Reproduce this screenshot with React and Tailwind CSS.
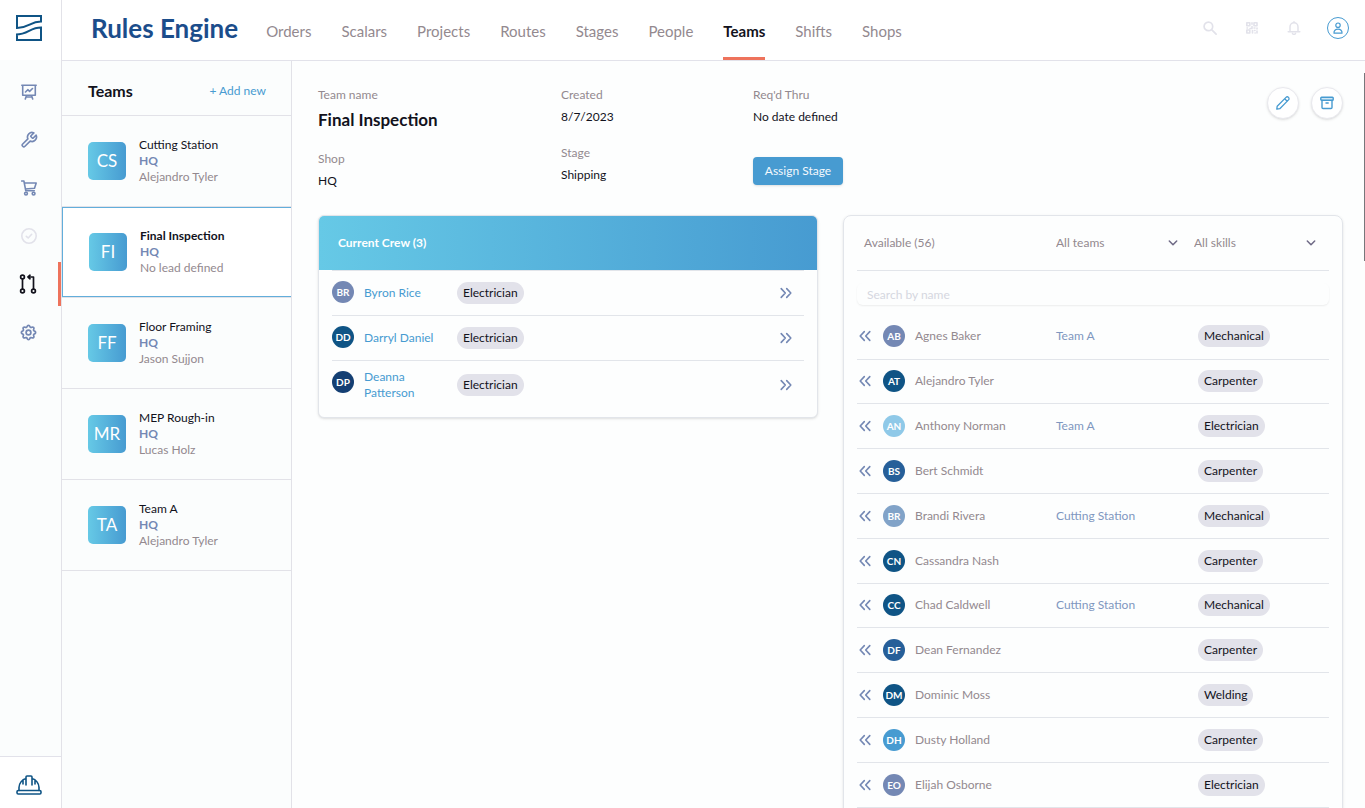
import React from 'react';
import { LuWrench } from 'react-icons/lu';
import { TbSettings } from 'react-icons/tb';

const navItems = ['Orders', 'Scalars', 'Projects', 'Routes', 'Stages', 'People', 'Teams', 'Shifts', 'Shops'];

const teams = [
  { code: 'CS', name: 'Cutting Station', lead: 'Alejandro Tyler' },
  { code: 'FI', name: 'Final Inspection', lead: 'No lead defined' },
  { code: 'FF', name: 'Floor Framing', lead: 'Jason Sujjon' },
  { code: 'MR', name: 'MEP Rough-in', lead: 'Lucas Holz' },
  { code: 'TA', name: 'Team A', lead: 'Alejandro Tyler' },
];

const crew = [
  { code: 'BR', name: 'Byron Rice', skill: 'Electrician', color: 'bg-[#7488b4]' },
  { code: 'DD', name: 'Darryl Daniel', skill: 'Electrician', color: 'bg-[#0f5485]' },
  { code: 'DP', name: 'Deanna Patterson', skill: 'Electrician', color: 'bg-[#143f73]' },
];

const available = [
  { code: 'AB', name: 'Agnes Baker', team: 'Team A', skill: 'Mechanical', color: 'bg-[#7488b4]' },
  { code: 'AT', name: 'Alejandro Tyler', team: '', skill: 'Carpenter', color: 'bg-[#0f5485]' },
  { code: 'AN', name: 'Anthony Norman', team: 'Team A', skill: 'Electrician', color: 'bg-[#8fc9e8]' },
  { code: 'BS', name: 'Bert Schmidt', team: '', skill: 'Carpenter', color: 'bg-[#265f99]' },
  { code: 'BR', name: 'Brandi Rivera', team: 'Cutting Station', skill: 'Mechanical', color: 'bg-[#81a3c8]' },
  { code: 'CN', name: 'Cassandra Nash', team: '', skill: 'Carpenter', color: 'bg-[#0f5485]' },
  { code: 'CC', name: 'Chad Caldwell', team: 'Cutting Station', skill: 'Mechanical', color: 'bg-[#0f5485]' },
  { code: 'DF', name: 'Dean Fernandez', team: '', skill: 'Carpenter', color: 'bg-[#265f99]' },
  { code: 'DM', name: 'Dominic Moss', team: '', skill: 'Welding', color: 'bg-[#0f5485]' },
  { code: 'DH', name: 'Dusty Holland', team: '', skill: 'Carpenter', color: 'bg-[#479bd1]' },
  { code: 'EO', name: 'Elijah Osborne', team: '', skill: 'Electrician', color: 'bg-[#7488b4]' },
];

function Svg({ size = 16, box = 16, width = 1.6, children }) {
  return (
    <svg width={size} height={size} viewBox={`0 0 ${box} ${box}`} fill="none" stroke="currentColor" strokeWidth={width} strokeLinecap="round" strokeLinejoin="round" aria-hidden="true">
      {children}
    </svg>
  );
}

const Logo = () => (
  <svg width="26" height="26" viewBox="0 0 26 26" fill="none" stroke="#0f5485" strokeWidth="2" aria-hidden="true">
    <path d="M1 13V1h24v5.500C14 6.500 13 13 1 13z" />
    <path d="M0 19.500C12 19.500 14 12.500 25 12.500V25H1v-5.500" />
  </svg>
);

const Presentation = () => (
  <Svg>
    <path d="M.8 1.200h14.400M1.700 1.200v10h12.600v-10M4.500 8l2.300-2.300 1.800 1.600L11.500 4.500M5.500 11.500L4.300 15M10.500 11.500l1.200 3.500M5 13h6" />
  </Svg>
);

const Cart = () => (
  <Svg>
    <path d="M.7 1h2.200l1.900 9.800h8.500M3.300 3h11.900l-1.700 5.300-9.200.7" />
    <circle cx="5" cy="13.600" r="1.400" />
    <circle cx="12.600" cy="13.600" r="1.400" />
  </Svg>
);

const CheckCircle = () => (
  <Svg>
    <circle cx="8" cy="8" r="7.200" />
    <path d="M5.300 8.300l1.900 1.700 3.500-3.700" />
  </Svg>
);

const Flow = () => (
  <Svg size={20} box={20} width={1.7}>
    <circle cx="3.500" cy="3" r="1.900" />
    <circle cx="3.500" cy="17" r="1.900" />
    <circle cx="14.500" cy="17" r="1.900" />
    <path d="M3.500 5v10M14.500 15V3H9.500M11 1.200L9 3l2 1.800" />
  </Svg>
);

const HardHat = () => (
  <Svg size={26} box={26} width={1.6}>
    <rect x="1" y="16.500" width="24" height="3.500" rx="1.200" />
    <path d="M3 16.500v-3c0-4 3-8 7-9M23 16.500v-3c0-4-3-8-7-9M10 11V3c0-.6.4-1 1-1h4c.6 0 1 .4 1 1v8M7 6.500V10M19 6.500V10" />
  </Svg>
);

const SearchIcon = () => (
  <Svg size={14} box={14} width={1.7}>
    <circle cx="5.400" cy="5.400" r="4.300" />
    <path d="M8.600 8.600l4.500 4.500" />
  </Svg>
);

const QrIcon = () => (
  <Svg size={12} box={12} width={1.6}>
    <rect x=".8" y=".8" width="3" height="3" />
    <rect x="8" y=".8" width="3" height="3" />
    <rect x=".8" y="8" width="3" height="3" />
    <path d="M6 .8v1.500M6 4.500v2H4M1 6h.5M8 6h1M11 6v1M6.500 8.500v2.500M8.500 8.500h.5M11 9v2M9 11h.2" />
  </Svg>
);

const Bell = () => (
  <Svg size={14} box={14} width={1.5}>
    <path d="M7 .8v.8M3 10.500V6c0-2.400 1.700-4.200 4-4.200S11 3.600 11 6v4.500M1.200 10.700h11.600M5.500 12.500c.3.700.8.900 1.500.9s1.200-.2 1.500-.9" />
  </Svg>
);

const Person = () => (
  <Svg size={12} box={12} width={1.2}>
    <circle cx="6" cy="3.200" r="2.200" />
    <path d="M2 11.200h8c.3-2.700-1.500-4-4-4s-4.300 1.300-4 4z" />
  </Svg>
);

const Pencil = () => (
  <Svg size={14} box={14} width={1.3}>
    <path d="M.8 13.200l.4-3L10 1.400a1.700 1.700 0 0 1 2.500 2.500L3.800 12.700zM8.700 2.800l2.500 2.500" />
  </Svg>
);

const Archive = () => (
  <Svg size={14} box={14} width={1.4}>
    <rect x=".8" y="1.300" width="12.400" height="3" rx=".8" fill="#cfe6f5" />
    <path d="M2 4.500v7c0 .6.300 1 1 1h8c.7 0 1-.4 1-1v-7M6 7h2.200" />
  </Svg>
);

const Chevrons = ({ left }) => (
  <Svg size={12} box={12} width={1.6}>
    <path d={left ? 'M5.300 1.600L1.200 6l4.100 4.400M10.800 1.600L6.700 6l4.100 4.400' : 'M1.200 1.600L5.300 6l-4.100 4.400M6.700 1.600L10.800 6l-4.100 4.400'} />
  </Svg>
);

const sideLinks = [
  { label: 'Reports', icon: <Presentation />, tone: 'text-[#7488b4]' },
  { label: 'Tools', icon: <LuWrench size={18} strokeWidth={2.200} className="-scale-x-100 rotate-90" />, tone: 'text-[#7488b4]' },
  { label: 'Purchasing', icon: <Cart />, tone: 'text-[#7488b4]' },
  { label: 'Quality', icon: <CheckCircle />, tone: 'text-[#e2e2ea]' },
  { label: 'Rules engine', icon: <Flow />, tone: 'text-[#12121c] border-[#ee735c]' },
  { label: 'Settings', icon: <TbSettings size={19} strokeWidth={2.200} />, tone: 'text-[#7488b4]' },
];

function Avatar({ code, color }) {
  return (
    <span className={`flex size-[22px] items-center justify-center rounded-full text-[10px] leading-none font-bold text-white ${color}`}>
      {code}
    </span>
  );
}

function Skill({ children }) {
  return <span className="inline-flex h-[22px] items-center rounded-full bg-[#e2e2ea] px-[6px] align-middle text-[#12121c]">{children}</span>;
}

function Field({ label, children, className = '' }) {
  return (
    <div className={className}>
      <dt className="text-[#93898f]">{label}</dt>
      <dd className="mt-[6px] text-[#12121c]">{children}</dd>
    </div>
  );
}

function Filter({ label, className }) {
  return (
    <label className={`relative flex items-center ${className}`}>
      <select aria-label={label} className="h-6 w-full appearance-none bg-transparent pr-5 leading-6 text-[#93898f] outline-none">
        <option>{label}</option>
      </select>
      <svg className="pointer-events-none absolute right-0" width="10" height="10" viewBox="0 0 10 10" fill="none" stroke="#6f6a86" strokeWidth="1.500" strokeLinecap="round" strokeLinejoin="round" aria-hidden="true">
        <path d="M1.300 3L5 6.800 8.700 3" />
      </svg>
    </label>
  );
}

export default function App() {
  return (
    <div className="flex h-screen overflow-hidden bg-[#fdfefe] font-[Lato,sans-serif] text-[12px] leading-4 text-[#12121c]">
      <aside className="flex w-[62px] shrink-0 flex-col border-r border-[#e2e2e8] bg-[#fbfdfd]">
        <a href="#home" aria-label="Home" className="flex h-[60px] shrink-0 items-center bg-white pb-1 pl-4">
          <Logo />
        </a>
        <nav aria-label="Sections" className="flex grow flex-col gap-1 pt-[10px]">
          {sideLinks.map((s) => (
            <a key={s.label} href="#section" aria-label={s.label} className={`flex h-11 items-center justify-center border-r-[3px] pr-px ${s.tone} ${s.label === 'Rules engine' ? '' : 'border-transparent'}`}>
              {s.icon}
            </a>
          ))}
        </nav>
        <a href="#site" aria-label="Job site" className="flex h-[52px] items-center border-t border-[#e2e2ea] bg-white pt-2 pl-4 text-[#0f5485]">
          <HardHat />
        </a>
      </aside>

      <div className="flex min-w-0 grow flex-col">
        <header className="flex h-[61px] shrink-0 items-center border-b border-[#e2e2ea] bg-white pr-4 pl-[29px]">
          <h1 className="pb-1 text-[26px] leading-8 font-bold whitespace-nowrap text-[#1b4d8b]">Rules Engine</h1>
          <nav aria-label="Rules engine" className="ml-[28px] flex h-full gap-[30px] text-[15px]">
            {navItems.map((n) => (
              <a
                key={n}
                href={`#${n.toLowerCase()}`}
                className={`flex items-center border-b-[3px] pt-1 ${n === 'Teams' ? 'border-[#ee735c] font-bold text-[#12121c]' : 'border-transparent text-[#93898f]'}`}
              >
                {n}
              </a>
            ))}
          </nav>
          <div className="ml-auto flex items-center pb-1 text-[#e2e2ea]">
            <button aria-label="Search" className="flex w-[42px] justify-center"><SearchIcon /></button>
            <button aria-label="Scan code" className="flex w-[42px] justify-center"><QrIcon /></button>
            <button aria-label="Notifications" className="flex w-[42px] justify-center"><Bell /></button>
            <button aria-label="Account" className="ml-3 flex size-[22px] items-center justify-center rounded-full border border-[#479bd1] text-[#479bd1]"><Person /></button>
          </div>
        </header>

        <div className="flex min-h-0 grow">
          <section className="w-[230px] shrink-0 border-r border-[#e2e2e8] bg-[#fbfdfd]">
            <div className="flex h-[55px] items-center justify-between border-b border-[#e2e2e8] pt-[5px] pr-[25px] pl-[26px]">
              <h2 className="text-[16px] font-bold">Teams</h2>
              <button className="text-[#479bd1]">+ Add new</button>
            </div>
            <ul>
              {teams.map((t) => {
                const active = t.code === 'FI';
                return (
                  <li key={t.code} className="border-b border-[#e2e2e8]">
                    <a
                      href="#team"
                      className={`flex h-[90px] items-center gap-[13px] pl-[26px] ${active ? 'border border-r-0 border-[#62aedb] bg-white' : ''}`}
                    >
                      <span className="flex size-[38px] items-center justify-center rounded-[5px] bg-linear-to-r from-[#66c9e6] to-[#479bd1] text-[17px] text-white">{t.code}</span>
                      <span className="flex flex-col">
                        <span className={active ? 'font-bold' : ''}>{t.name}</span>
                        <span className="font-bold text-[#7488b4]">HQ</span>
                        <span className="text-[#93898f]">{t.lead}</span>
                      </span>
                    </a>
                  </li>
                );
              })}
            </ul>
          </section>

          <main className="relative min-w-0 grow overflow-hidden pr-[22px] pl-[26px]">
            <div className="flex pt-[26px]">
              <dl className="w-[243px]">
                <div>
                  <dt className="text-[#93898f]">Team name</dt>
                  <dd className="mt-[7px] text-[17px] leading-5 font-bold">Final Inspection</dd>
                </div>
                <Field label="Shop" className="mt-[21px]">HQ</Field>
              </dl>
              <dl className="w-[192px]">
                <Field label="Created">8/7/2023</Field>
                <Field label="Stage" className="mt-5">Shipping</Field>
              </dl>
              <div>
                <dl>
                  <Field label="Req'd Thru">No date defined</Field>
                </dl>
                <button className="mt-8 h-7 w-[90px] rounded bg-[#479bd1] text-[#f4f9fd] shadow">Assign Stage</button>
              </div>
              <div className="ml-auto flex gap-3 text-[#479bd1]">
                <button aria-label="Edit team" className="flex size-8 items-center justify-center rounded-full border border-[#e9e9ee] bg-white shadow"><Pencil /></button>
                <button aria-label="Archive team" className="flex size-8 items-center justify-center rounded-full border border-[#e9e9ee] bg-white shadow"><Archive /></button>
              </div>
            </div>

            <div className="mt-[26px] grid grid-cols-2 items-start gap-[25px]">
              <section className="overflow-hidden rounded-md border border-[#e2e5ea] bg-[#fdfefe] pb-2 shadow">
                <h3 className="flex h-[54px] items-center bg-linear-to-r from-[#66c9e6] to-[#479bd1] pl-[19px] font-bold text-white">Current Crew (3)</h3>
                <div className="px-[13px]">
                  <table className="w-full table-fixed border-collapse">
                    <colgroup>
                      <col className="w-8" />
                      <col className="w-[93px]" />
                      <col />
                      <col className="w-6" />
                    </colgroup>
                    <tbody>
                      {crew.map((p) => (
                        <tr key={p.name} className="h-[45px] border-t border-[#e2e5ea]">
                          <td className="pt-[10px] align-top"><Avatar code={p.code} color={p.color} /></td>
                          <td className="py-2 pr-4 text-[#479bd1]">{p.name}</td>
                          <td><Skill>{p.skill}</Skill></td>
                          <td><button aria-label={`Remove ${p.name}`} className="block text-[#7488b4]"><Chevrons /></button></td>
                        </tr>
                      ))}
                    </tbody>
                  </table>
                </div>
              </section>

              <section className="rounded-lg border border-[#e2e5ea] px-[13px] pb-6 shadow-sm">
                <div className="flex h-[55px] items-center border-b border-[#e2e5ea] pl-[7px] text-[#93898f]">
                  <h3 className="w-[192px]">Available (56)</h3>
                  <Filter label="All teams" className="w-[122px]" />
                  <Filter label="All skills" className="ml-4 w-[122px]" />
                </div>
                <input aria-label="Search by name" placeholder="Search by name" className="mt-3 block h-[22px] w-full rounded-md px-[10px] shadow-[0_1px_2px_rgba(0,0,0,0.07)] outline-none placeholder:text-[#d5d7e0]" />
                <table className="mt-[9px] w-full table-fixed border-collapse">
                  <colgroup>
                    <col className="w-[26px]" />
                    <col className="w-8" />
                    <col className="w-[141px]" />
                    <col className="w-[142px]" />
                    <col />
                  </colgroup>
                  <tbody>
                    {available.map((p) => (
                      <tr key={p.name} className="h-[45px] border-b border-[#e2e5ea] nth-[5n+2]:h-11">
                        <td className="pl-[2px]"><button aria-label={`Add ${p.name}`} className="block text-[#7488b4]"><Chevrons left /></button></td>
                        <td><Avatar code={p.code} color={p.color} /></td>
                        <td className="text-[#93898f]">{p.name}</td>
                        <td className="text-[#7f97c0]">{p.team}</td>
                        <td><Skill>{p.skill}</Skill></td>
                      </tr>
                    ))}
                  </tbody>
                </table>
              </section>
            </div>
            <div className="absolute top-3 right-0 h-[188px] w-px bg-[#77777b]" />
          </main>
        </div>
      </div>
    </div>
  );
}
